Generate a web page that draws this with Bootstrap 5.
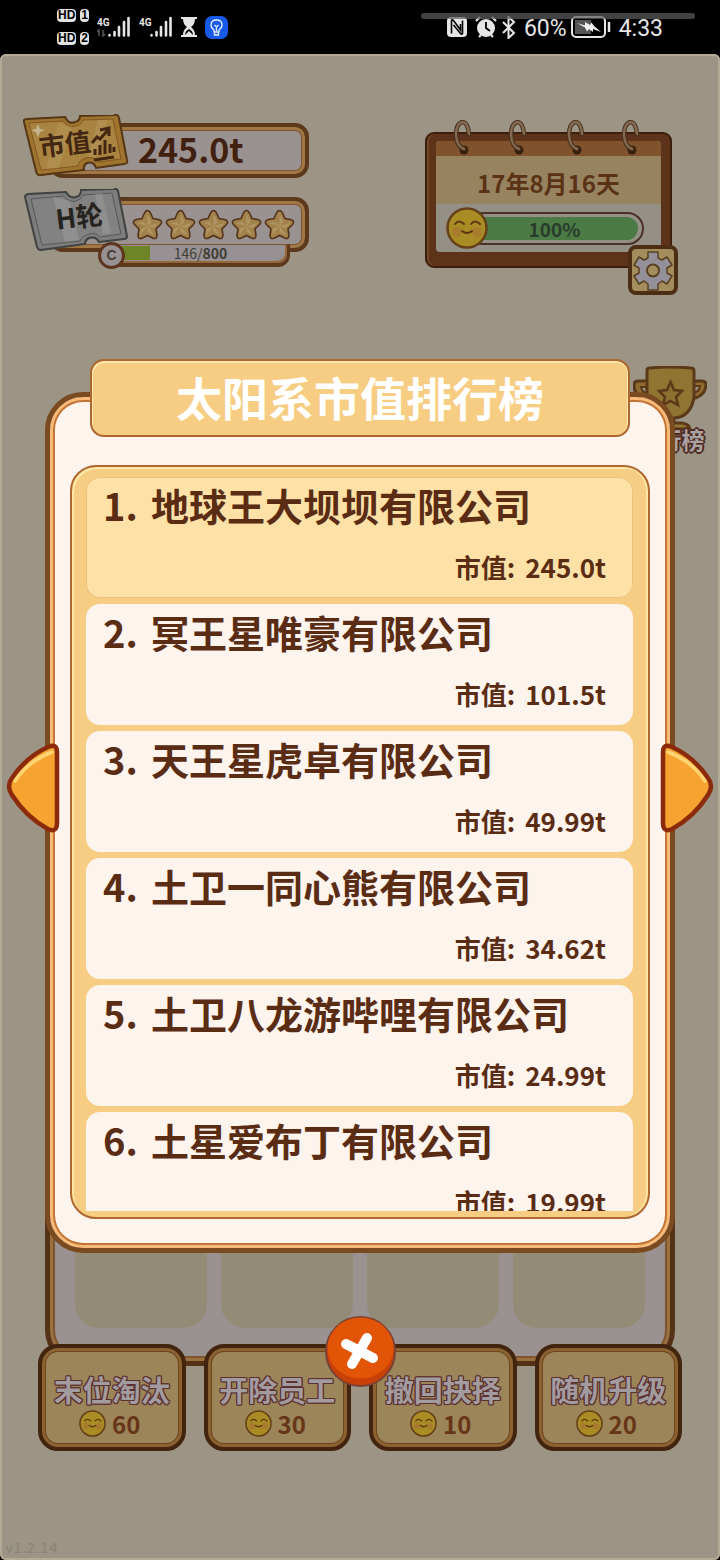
<!DOCTYPE html>
<html lang="zh-CN">
<head>
<meta charset="utf-8">
<meta name="viewport" content="width=device-width, initial-scale=1">
<title>太阳系市值排行榜</title>
<link href="https://cdn.jsdelivr.net/npm/bootstrap@5.3.0/dist/css/bootstrap.min.css" rel="stylesheet">
<style>
  body { background: #000; font-family: "Noto Sans CJK SC", sans-serif; font-weight: 700; color: #5a2c14; }
  button { font-weight: 700; }
  svg { display: block; flex: none; }

  /* phone status bar */
  .phone-bar { height: 54px; padding: 0 57px; background: #000; color: #e6e6e6; font: 400 23px/50px Roboto, sans-serif; }
  .phone-text { padding-top: 4px; }
  .hd-tags { gap: 10px; }
  .hd-tag { background: #e2e2e2; color: #000; border-radius: 4px; font: 700 12px/13px "Liberation Sans", sans-serif; padding: 0 1px; }
  .pull-handle { position: absolute; top: 13px; right: 25px; width: 38%; height: 6px; border-radius: 3px; background: #5c5c5cb8; }

  /* dimmed game screen */
  .game { min-height: calc(100vh - 54px); background: #9c9586; border-radius: 6px; box-shadow: inset 0 0 0 2px #b3ab95; }
  .hud { padding: 60px 48px 0 23px; }
  .company { width: 286px; gap: 10px; }
  .ticket { z-index: 2; }
  .plaque { margin-left: -80px; padding-left: 79px; height: 55px; border: 4px solid #5d391b; border-left-width: 3px; border-radius: 14px; background: #999290;
    box-shadow: inset 0 0 0 3px #a07845, inset 0 0 0 4px #80542e; }
  .worth { font-size: 34px; line-height: 44px; color: #42200f; padding-left: 7px; }
  .level { margin: -20px 19px 0 75px; }
  .level-badge { width: 27px; height: 27px; border: 3px solid #5f351f; border-radius: 50%; background: #989193; color: #4a3d35; font: 700 14px/21px "Liberation Sans", sans-serif; z-index: 2; }
  .level-track { height: 23px; margin-left: -8px; border: 3px solid #5d391b; border-top: 1px solid #80542e; border-bottom-width: 4px; border-radius: 0 0 12px 0; background: #989193; box-shadow: inset -2px -2px 0 #94683b; }
  .level-fill { height: 14px; margin-top: 1px; background: #6f8426; }
  .level-text { position: absolute; inset: 0; font-size: 14px; line-height: 17px; color: #3d3d36; padding-right: 6px; }

  .calendar { width: 247px; margin-top: 18px; padding: 7px 9px 14px; border: 2px solid #3c1e0e; border-radius: 9px; background: #5d331a; box-shadow: inset 2px 0 0 #734624; }
  .cal-page { border-radius: 4px; overflow: hidden; background: #949086; }
  .cal-strip { height: 15px; background: #80532d; }
  .cal-date { background: #988360; color: #5a3216; font-size: 24px; line-height: 42px; padding-top: 6px; }
  .cal-mood { padding: 3px 17px 3px 10px; }
  .mood-face { z-index: 1; }
  .mood-track { height: 33px; margin-left: -22px; padding: 3px 4px 3px 3px; border: 2px solid #4b3027; border-radius: 17px; }
  .mood-fill { background: #4b7a45; color: #293c2c; border-radius: 0 12px 12px 0; font-size: 19px; line-height: 23px; }
  .rings { position: absolute; top: -14px; left: 27px; }
  .gear { position: absolute; right: -8px; bottom: -29px; width: 50px; height: 50px; border: 4px solid #4e2d15; border-radius: 8px; background: #a38d5c; }

  .trophy { margin: 97px 13px 0 0; width: 74px; }
  .outlined { color: #a9a2a4; text-shadow: 2px 0 #502a1e, -2px 0 #502a1e, 0 2px #502a1e, 0 -2px #502a1e, 1px 1px #502a1e, -1px 1px #502a1e, 1px -1px #502a1e, -1px -1px #502a1e; }
  .trophy-label { font-size: 23px; line-height: 24px; margin-top: -4px; }

  .board { margin: 0 45px; padding: 30px 30px 38px; border: 5px solid #543216; border-radius: 36px; background: #999290; box-shadow: inset 0 0 0 3px #9a703f, inset 0 0 0 5px #80542e; }
  .slots { gap: 14px; margin: 0 -5px -5px; }
  .slot { height: 132px; border-radius: 24px; background: #948b76; }
  .actions { margin: -22px 38px 0; gap: 18px; z-index: 1; }
  .act { flex: 1 1 0; height: 107px; padding: 0; border: 4px solid #43240f; border-radius: 20px; background: #9b8559; box-shadow: inset 0 0 0 3px #8c6230, inset 0 0 0 4px #6c4521; }
  .act-name { font-size: 29px; line-height: 40px; color: #a29b9f; white-space: nowrap; padding-top: 12px; }
  .act .outlined { text-shadow: 1px 0 #5b3030, -1px 0 #5b3030, 0 1px #5b3030, 0 -1px #5b3030, 1px 1px #5b3030, -1px 1px #5b3030, 1px -1px #5b3030, -1px -1px #5b3030; }
  .act-cost { font-size: 24px; line-height: 30px; color: #673518; gap: 6px; padding-right: 4px; }
  .version { margin: 86px 0 0 5px; font: 400 14px/23px "DejaVu Sans", sans-serif; color: #8b8475; }

  /* ranking dialog */
  .ranking { inset: 0; padding: 305px 45px 173px; z-index: 5; }
  .rank-title { margin: 0 45px -45px; padding-bottom: 4px; z-index: 2; font-size: 46px; line-height: 70px; font-weight: 700; color: #fff; background: #f6cd82; border: 2px solid #ad6630; border-radius: 14px; box-shadow: inset 1px 2px 0 #ffe8ac, inset -1px 0 0 #ffe8ac; }
  .rank-panel { min-height: 0; padding: 68px 20px 29px; border: 5px solid #7a4a20; border-radius: 38px; background: #fdf4ee; box-shadow: inset 0 0 0 3px #f8bb79, inset 0 0 0 5px #c27536; }
  .rank-frame { min-height: 0; padding: 10px 15px 6px 14px; border: 2px solid #ae6830; border-radius: 26px; background: #f6cd82; box-shadow: inset 2px 2px 0 #ffe6a6, inset -2px 0 0 #ffe6a6; }
  .rank-rows { flex: 1 1 0; min-height: 0; overflow: hidden; gap: 6px; }
  .firm { flex: none; padding: 3px 27px 11px 17px; border-radius: 14px; background: #fdf4ee; }
  .firm.own { background: #fee1a6; box-shadow: inset 0 0 0 1px #ecc27b; }
  .firm-name { font-size: 38px; line-height: 50px; margin: 0 0 17px; font-weight: 700; white-space: nowrap; }
  .firm-no { display: inline-block; width: 48px; }
  .firm-worth { font-size: 26px; line-height: 40px; gap: 10px; }
  .turn { position: absolute; top: 40.6%; }
  .turn-prev { left: -44px; }
  .turn-next { right: -44px; }
  .shut { margin-top: 63px; }
</style>
</head>
<body>
<svg width="0" height="0" class="position-absolute" aria-hidden="true">
  <defs>
    <symbol id="smile" viewBox="0 0 42 42">
      <circle cx="21" cy="21" r="19.5" fill="#a98c24" stroke="#65401a" stroke-width="2.5"/>
      <circle cx="11" cy="25" r="5" fill="#a97335" opacity=".7"/><circle cx="31" cy="25" r="5" fill="#a97335" opacity=".7"/>
      <path d="M9 17q4-5 9 0M25 17q4-5 9 0M16 24q5 4 10 0" fill="none" stroke="#5a3613" stroke-width="2" stroke-linecap="round"/>
    </symbol>
    <symbol id="star" viewBox="0 0 32 32">
      <path d="M16 1.500Q18 1.500 19.500 5L21.500 9.500 27 10.500Q32 12 29 15.500L24.500 20 25.500 26Q25.500 31 21 29L16 26.500 11 29Q6.500 31 6.500 26L7.500 20 3 15.500Q0 12 5 10.500L10.500 9.500 12.500 5Q14 1.500 16 1.500Z" fill="#a2814b" stroke="#53331b" stroke-width="1.6"/>
      <path d="M16 17V5l4 8zM16 17l11-3-5 5zM16 17l7 9-7-3zM16 17l-7 9v-6zM16 17L5 14l7-1z" fill="#b5a06c" opacity=".7"/>
    </symbol>
    <symbol id="bars" viewBox="0 0 22 21">
      <path d="M1.5 19v.5M6.500 16v3.500M11 11v8.500M16 6v13.500M20.500 2v17.500" stroke="#e6e6e6" stroke-width="2.600" stroke-linecap="round"/>
    </symbol>
  </defs>
</svg>

<header class="phone-bar d-flex justify-content-between position-relative">
  <div class="d-flex align-items-center">
    <div class="hd-tags d-flex flex-column">
      <div class="d-flex gap-1"><span class="hd-tag">HD</span><span class="hd-tag">1</span></div>
      <div class="d-flex gap-1"><span class="hd-tag">HD</span><span class="hd-tag">2</span></div>
    </div>
    <svg class="ms-2" width="34" height="24" viewBox="0 0 34 24"><text x="0" y="11" font-size="10" font-family="Roboto" font-weight="700" fill="#e6e6e6">4G</text><path d="M2 21v-6l-2 2M6 15v6l2-2" stroke="#555" stroke-width="1.500" fill="none"/><use href="#bars" x="11" y="1" width="22" height="21"/></svg>
    <svg class="ms-2" width="34" height="24" viewBox="0 0 34 24"><text x="0" y="11" font-size="10" font-family="Roboto" font-weight="700" fill="#e6e6e6">4G</text><use href="#bars" x="11" y="1" width="22" height="21"/></svg>
    <svg class="ms-2" width="16" height="22" viewBox="0 0 16 22"><path d="M0 1h16v2h-2q0 5-4 8 4 3 4 8h2v2H0v-2h2q0-5 4-8-4-3-4-8H0z" fill="#e6e6e6"/><path d="M4 19q0-4 4-6 4 2 4 6l-4-4z" fill="#000"/></svg>
    <svg class="ms-2" width="23" height="23" viewBox="0 0 23 23"><rect width="23" height="23" rx="7" fill="#1759e8"/><path d="M9 16v-2q-3-2-3-5 0-5 5.500-5T17 9q0 3-3 5v2zM9.500 17v2h4v-2M11.500 15v-5M9.500 9l2 2 2-2" fill="none" stroke="#e8f0ff" stroke-width="1.300"/></svg>
  </div>
  <div class="d-flex align-items-center">
    <svg width="20" height="22" viewBox="0 0 20 22"><rect y="1" width="20" height="20" rx="4" fill="#e6e6e6"/><path d="M4.500 17.500V5q0-2 2-.5l7 9.500V8M15.500 4.500V17q0 2-2 .5L6.500 9" fill="none" stroke="#000" stroke-width="1.600"/></svg>
    <svg class="ms-2" width="22" height="22" viewBox="0 0 22 22"><circle cx="11" cy="12" r="9" fill="#e6e6e6"/><path d="M1 5l4-4M21 5l-4-4M4 21l2-2M18 21l-2-2" stroke="#e6e6e6" stroke-width="2.200"/><path d="M11 6v6l4 3" stroke="#000" stroke-width="1.800" fill="none"/></svg>
    <svg class="ms-1" width="15" height="23" viewBox="0 0 15 23"><path d="M2 6l11 11-5.500 5V1L13 6 2 17" fill="none" stroke="#e6e6e6" stroke-width="2"/></svg>
    <span class="phone-text ms-2">60%</span>
    <svg class="ms-1" width="40" height="22" viewBox="0 0 40 22"><rect x="1" y="1" width="33" height="20" rx="4" fill="none" stroke="#e6e6e6" stroke-width="2"/><rect x="4" y="4" width="16" height="14" fill="#555"/><path d="M6 7l8 2.500V6l5 3 1.500-2.500L23 10l7 6-8-3v3l-4-3-2 2.500-2-4z" fill="#f2f2f2"/><path d="M38 6v10" stroke="#e6e6e6" stroke-width="2.500"/></svg>
    <span class="phone-text ms-2">4:33</span>
  </div>
  <span class="pull-handle"></span>
</header>

<main class="game position-relative d-flex flex-column">
  <section class="hud d-flex justify-content-between align-items-start">
    <div class="company d-flex flex-column">
      <div class="d-flex align-items-end">
        <svg class="ticket position-relative" width="106" height="64" viewBox="0 0 106 64">
          <path d="M1 8Q0 5 4 5L42 3Q46 11 52 8 57 7 57 2L91 1Q95 0 96 4L104 46Q105 50 101 50L73 54Q71 47 64 49 60 51 61 56L18 61Q14 62 13 57Z" fill="#9e742f" stroke="#573616" stroke-width="2"/>
          <path d="M6 9L40 7Q45 15 52 12 58 12 60 6L90 5 98 45 75 48Q70 42 63 44 56 46 55 52L18 56Z" fill="#a98440" stroke="#84551f" stroke-width="1"/>
          <path d="M35 9l-12 46 13-1 13-41zM75 6L65 43h8L85 6z" fill="#b5975a" opacity=".55"/>
          <path d="M15 10l2 5 5 1-5 2-2 5-2-5-5-2 5-1z" fill="#c5b58f"/>
          <text transform="rotate(-7 40 32)" x="16" y="40" font-size="26" font-family="Noto Sans CJK SC" font-weight="700" fill="#432712">市值</text>
          <path d="M72 35v6M77 31v10M82 26v14M87 30v9M91 33v5M71 46l20-3" stroke="#432712" stroke-width="3"/><path d="M69 29l5-6 3 2 8-9M77 16l9-2v8" stroke="#432712" stroke-width="3" fill="none"/>
        </svg>
        <div class="plaque flex-fill"><div class="worth">245.0t</div></div>
      </div>
      <div class="d-flex align-items-end">
        <svg class="ticket position-relative" width="106" height="64" viewBox="0 0 106 64">
          <path d="M2 9Q2 7 5 6L43 4Q47 11 53 9 58 8 58 2L91 1Q94 0 95 3L104 48Q104 51 101 51L76 54Q73 48 66 50 62 52 62 56L18 62Q15 62 14 59Z" fill="#7c7d7c" stroke="#3e4340" stroke-width="2"/>
          <path d="M8 11L41 8Q46 15 53 13 58 12 60 7L89 5 98 46 77 49Q73 44 66 46 59 48 57 53L19 57Z" fill="#818281" stroke="#555959" stroke-width="1"/>
          <path d="M30 9l12 45 14-2-9-39zM72 6l8 40 8-1-9-40z" fill="#9c9c9b" opacity=".5"/>
          <text transform="rotate(-7 55 32)" x="33" y="39" font-size="27" font-family="Noto Sans CJK SC" font-weight="700" fill="#26231f">H轮</text>
        </svg>
        <div class="plaque flex-fill d-flex align-items-center">
          <svg width="33" height="32"><use href="#star"/></svg><svg width="33" height="32"><use href="#star"/></svg><svg width="33" height="32"><use href="#star"/></svg><svg width="33" height="32"><use href="#star"/></svg><svg width="33" height="32"><use href="#star"/></svg>
        </div>
      </div>
      <div class="level d-flex align-items-center">
        <div class="level-badge text-center position-relative">C</div>
        <div class="level-track flex-fill position-relative">
          <div class="level-fill" style="width:18%"></div>
          <div class="level-text text-center"><span class="fw-normal">146/</span>800</div>
        </div>
      </div>
    </div>

    <div class="calendar position-relative">
      <div class="cal-page">
        <div class="cal-strip"></div>
        <div class="cal-date text-center">17年8月16天</div>
        <div class="cal-mood d-flex align-items-center">
          <svg class="mood-face position-relative" width="42" height="42"><use href="#smile"/></svg>
          <div class="mood-track flex-fill"><div class="mood-fill text-center">100%</div></div>
        </div>
      </div>
      <svg class="rings" width="190" height="36" viewBox="0 0 190 36">
        <g id="ring"><circle cx="10" cy="30" r="4.500" fill="#38200f"/><path d="M15 14Q14 2 8 2 2 4 2 15 3 27 10 29" fill="none" stroke="#44301f" stroke-width="4.500" stroke-linecap="round"/><path d="M15 14Q14 2 8 2 2 4 2 15 3 27 10 29" fill="none" stroke="#85694f" stroke-width="2.500" stroke-linecap="round"/></g>
        <use href="#ring" x="55"/><use href="#ring" x="113"/><use href="#ring" x="168"/>
      </svg>
      <button class="gear p-0" aria-label="设置">
        <svg width="42" height="42" viewBox="0 0 42 42"><path d="M16 9V3h10v6l4 2 5-3 5 8-5 3v5l5 3-5 8-5-3-4 3v6H16v-6l-4-3-5 3-5-8 5-3v-5l-5-3 5-8 5 3z" fill="#94909a" stroke="#58401f" stroke-width="1.500" stroke-linejoin="round"/><circle cx="21" cy="21.500" r="6" fill="#a38d5c" stroke="#58401f" stroke-width="2"/></svg>
      </button>
    </div>
  </section>

  <button class="trophy btn p-0 border-0 align-self-end">
    <svg width="74" height="65" viewBox="0 0 74 65">
      <path d="M14 15H5q-4 0-4 4 0 13 15 13M60 15h9q4 0 4 4-1 12-15 14" fill="#8f6b30" stroke="#5b3818" stroke-width="3"/>
      <path d="M13 21H8q1 6 7 6zM61 20h6q-1 7-8 7z" fill="#9c9586" stroke="#5b3818" stroke-width="2"/>
      <path d="M14 4q0-2 3-2 20-2 41 0 3 0 3 3v26q-3 20-20 21v5h8q7 1 8 6H19q1-5 8-6h7v-5Q17 50 14 31z" fill="#8f7432" stroke="#5b3818" stroke-width="3"/>
      <path d="M37.500 16l3.500 8 8 1-6 6 2 8-7.500-4-7.500 4 2-8-6-6 8-1z" fill="#8c7030" stroke="#5b3818" stroke-width="2.500"/>
    </svg>
    <span class="trophy-label outlined d-block fw-bold text-nowrap">排行榜</span>
  </button>

  <section class="board mt-auto">
    <div class="slots d-flex">
      <div class="slot flex-fill"></div><div class="slot flex-fill"></div><div class="slot flex-fill"></div><div class="slot flex-fill"></div>
    </div>
  </section>

  <nav class="actions d-flex position-relative">
    <button class="act"><span class="act-name outlined d-block">末位淘汰</span><span class="act-cost d-flex justify-content-center align-items-center"><svg width="27" height="27"><use href="#smile"/></svg>60</span></button>
    <button class="act"><span class="act-name outlined d-block">开除员工</span><span class="act-cost d-flex justify-content-center align-items-center"><svg width="27" height="27"><use href="#smile"/></svg>30</span></button>
    <button class="act"><span class="act-name outlined d-block">撤回抉择</span><span class="act-cost d-flex justify-content-center align-items-center"><svg width="27" height="27"><use href="#smile"/></svg>10</span></button>
    <button class="act"><span class="act-name outlined d-block">随机升级</span><span class="act-cost d-flex justify-content-center align-items-center"><svg width="27" height="27"><use href="#smile"/></svg>20</span></button>
  </nav>
  <footer class="version">v1.2.14</footer>

  <div class="ranking position-absolute d-flex flex-column" role="dialog" aria-labelledby="rank-title">
    <h1 id="rank-title" class="rank-title position-relative text-center">太阳系市值排行榜</h1>
    <div class="rank-panel position-relative flex-fill d-flex flex-column">
      <div class="rank-frame flex-fill d-flex flex-column">
        <ol class="rank-rows list-unstyled mb-0 d-flex flex-column">
          <li class="firm own"><h2 class="firm-name"><span class="firm-no">1.</span>地球王大坝坝有限公司</h2><div class="firm-worth d-flex justify-content-end"><span>市值:</span><span>245.0t</span></div></li>
          <li class="firm"><h2 class="firm-name"><span class="firm-no">2.</span>冥王星唯豪有限公司</h2><div class="firm-worth d-flex justify-content-end"><span>市值:</span><span>101.5t</span></div></li>
          <li class="firm"><h2 class="firm-name"><span class="firm-no">3.</span>天王星虎卓有限公司</h2><div class="firm-worth d-flex justify-content-end"><span>市值:</span><span>49.99t</span></div></li>
          <li class="firm"><h2 class="firm-name"><span class="firm-no">4.</span>土卫一同心熊有限公司</h2><div class="firm-worth d-flex justify-content-end"><span>市值:</span><span>34.62t</span></div></li>
          <li class="firm"><h2 class="firm-name"><span class="firm-no">5.</span>土卫八龙游哔哩有限公司</h2><div class="firm-worth d-flex justify-content-end"><span>市值:</span><span>24.99t</span></div></li>
          <li class="firm"><h2 class="firm-name"><span class="firm-no">6.</span>土星爱布丁有限公司</h2><div class="firm-worth d-flex justify-content-end"><span>市值:</span><span>19.99t</span></div></li>
        </ol>
      </div>
      <button class="turn turn-prev btn p-0 border-0" aria-label="上一页">
        <svg width="54" height="90" viewBox="0 0 54 90"><path d="M42 4Q51 0 51 9V80Q51 90 42 86 20 74 6 52 0 43 6 35 20 14 42 4z" fill="#f6a331" stroke="#8b2b0c" stroke-width="4.500"/><path d="M9 38Q22 18 46 9" fill="none" stroke="#ffd574" stroke-width="3.500" stroke-linecap="round"/></svg>
      </button>
      <button class="turn turn-next btn p-0 border-0" aria-label="下一页">
        <svg width="54" height="90" viewBox="0 0 54 90"><path d="M12 4Q3 0 3 9V80Q3 90 12 86 34 74 48 52 54 43 48 35 34 14 12 4z" fill="#f6a331" stroke="#8b2b0c" stroke-width="4.500"/><path d="M45 38Q32 18 8 9" fill="none" stroke="#ffd574" stroke-width="3.500" stroke-linecap="round"/></svg>
      </button>
    </div>
    <button class="shut btn p-0 border-0 align-self-center" aria-label="关闭">
      <svg width="71" height="71" viewBox="0 0 71 71"><circle cx="35.500" cy="35.500" r="34.500" fill="#c94009" stroke="#7b4134" stroke-width="2"/><ellipse cx="35.500" cy="32" rx="33" ry="30.500" fill="#e25406"/><path d="M21 28l27 14M42 22L27 48" stroke="#fff" stroke-width="10" stroke-linecap="round"/></svg>
    </button>
  </div>
</main>
<script src="https://cdn.jsdelivr.net/npm/bootstrap@5.3.0/dist/js/bootstrap.bundle.min.js"></script>
</body>
</html>
